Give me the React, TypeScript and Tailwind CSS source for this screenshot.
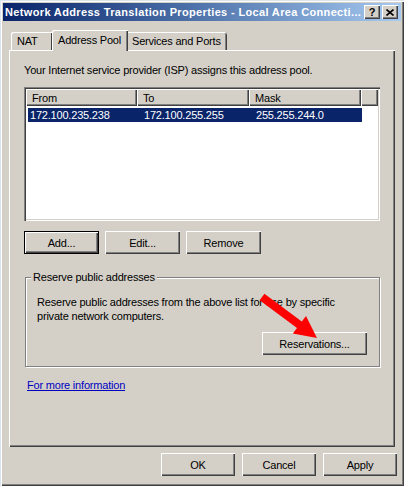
import React from "react";

const raised =
   "bg-[#d4d0c8] shadow-[inset_1px_1px_#ffffff,inset_-1px_-1px_#404040,inset_-2px_-2px_#808080]";

const Btn = ({ label, w = "w-[75px]", def }: { label: string; w?: string; def?: boolean }) => (
   <div
      className={`${w} h-[23px] flex items-center justify-center ${raised} ${
         def ? "outline outline-1 outline-black -outline-offset-1 shadow-[inset_2px_2px_#ffffff,inset_-2px_-2px_#404040,inset_-3px_-3px_#808080]" : ""
      }`}
   >
      {label}
   </div>
);

const HeaderCell = ({ label, w }: { label: string; w: string }) => (
   <div className={`${w} h-[17px] flex items-center pl-[6px] ${raised}`}>{label}</div>
);

const App = () => (
   <div className="relative w-[404px] h-[486px] bg-[#d4d0c8] p-[3px] flex flex-col text-[11px] leading-[14px] tracking-[-0.2px] text-black font-['Liberation_Sans',Arial,sans-serif] shadow-[inset_1px_1px_#dce4f0,inset_2px_2px_#ffffff,inset_-1px_-1px_#404040,inset_-2px_-2px_#808080]">
      {/* title bar */}
      <div className="h-[18px] flex items-center bg-gradient-to-r from-[#0a246a] to-[#a6caf0] pl-[2px] pr-[3px]">
         <span className="flex-1 font-bold text-white tracking-[0.35px] whitespace-nowrap overflow-hidden">
            Network Address Translation Properties - Local Area Connecti...
         </span>
         <div className="flex gap-[2px]">
            <div className={`w-[16px] h-[14px] flex items-center justify-center font-bold text-[11px] ${raised}`}>?</div>
            <div className={`w-[16px] h-[14px] flex items-center justify-center ${raised}`}>
               <svg width="8" height="7" viewBox="0 0 8 7">
                  <path d="M0.5 0.5 L7.5 6.5 M7.5 0.5 L0.5 6.5" stroke="black" strokeWidth="1.6" />
               </svg>
            </div>
         </div>
      </div>

      {/* tabs */}
      <div className="mt-[9px] ml-[8px] h-[20px] flex items-end relative z-10">
         <div className="w-[41px] h-[18px] flex items-center pl-[6px] rounded-tl-[2px] shadow-[inset_1px_1px_#ffffff,inset_-1px_0_#404040]">
            NAT
         </div>
         <div className="w-[76px] h-[21px] -mb-[1px] flex items-center pl-[6px] pb-[2px] bg-[#d4d0c8] rounded-tl-[2px] shadow-[inset_1px_1px_#ffffff,inset_-1px_0_#404040,inset_-2px_0_#808080]">
            Address Pool
         </div>
         <div className="w-[99px] h-[18px] flex items-center pl-[4px] rounded-tr-[2px] shadow-[inset_0_1px_#ffffff,inset_-1px_0_#404040,inset_-2px_0_#808080]">
            Services and Ports
         </div>
      </div>

      {/* panel */}
      <div className="ml-[6px] w-[386px] h-[397px] px-[15px] flex flex-col shadow-[inset_1px_1px_#ffffff,inset_-1px_-1px_#404040,inset_-2px_-2px_#808080]">
         <p className="mt-[13px]">Your Internet service provider (ISP) assigns this address pool.</p>

         {/* list view */}
         <div className="mt-[10px] w-[356px] h-[134px] bg-white p-[2px] shadow-[inset_1px_1px_#808080,inset_2px_2px_#404040,inset_-1px_-1px_#ffffff,inset_-2px_-2px_#d4d0c8]">
            <div className="flex">
               <HeaderCell label="From" w="w-[111px]" />
               <HeaderCell label="To" w="w-[112px]" />
               <HeaderCell label="Mask" w="w-[112px]" />
               <div className={`flex-1 h-[17px] ${raised}`} />
            </div>
            <div className="mt-[2px] ml-[2px] w-[334px] h-[14px] flex items-center bg-[#0a246a] text-white">
               <span className="w-[109px] pl-[2px]">172.100.235.238</span>
               <span className="w-[112px] pl-[7px]">172.100.255.255</span>
               <span className="pl-[7px]">255.255.244.0</span>
            </div>
         </div>

         <div className="mt-[10px] flex gap-[6px]">
            <Btn label="Add..." def />
            <Btn label="Edit..." />
            <Btn label="Remove" />
         </div>

         <fieldset className="mt-[16px] ml-[1px] w-[355px] border border-[#808080] pl-[11px] pr-[12px] pb-[11px] shadow-[inset_1px_1px_#ffffff,1px_1px_#ffffff]">
            <legend className="-ml-[6px] px-[2px] bg-[#d4d0c8]">Reserve public addresses</legend>
            <p className="mt-[11px]">
               Reserve public addresses from the above list for use by specific
               <br />
               private network computers.
            </p>
            <div className="mt-[9px] flex justify-end">
               <Btn label="Reservations..." w="w-[105px]" />
            </div>
         </fieldset>

         <a className="mt-[11px] ml-[3px] text-[#0000c0] underline w-fit">For more information</a>
      </div>

      {/* dialog buttons */}
      <div className="mt-[6px] pr-[4px] flex justify-end gap-[7px]">
         <Btn label="OK" w="w-[74px]" />
         <Btn label="Cancel" w="w-[74px]" />
         <Btn label="Apply" w="w-[74px]" />
      </div>

      {/* red annotation arrow */}
      <svg className="absolute left-0 top-0 pointer-events-none" width="404" height="486">
         <polygon
            points="259.6,300.2 264.4,293.8 301.8,321.6 306,316 317,338 292.8,333.6 297,328"
            fill="#ff0000"
         />
      </svg>
   </div>
);

export default App;
